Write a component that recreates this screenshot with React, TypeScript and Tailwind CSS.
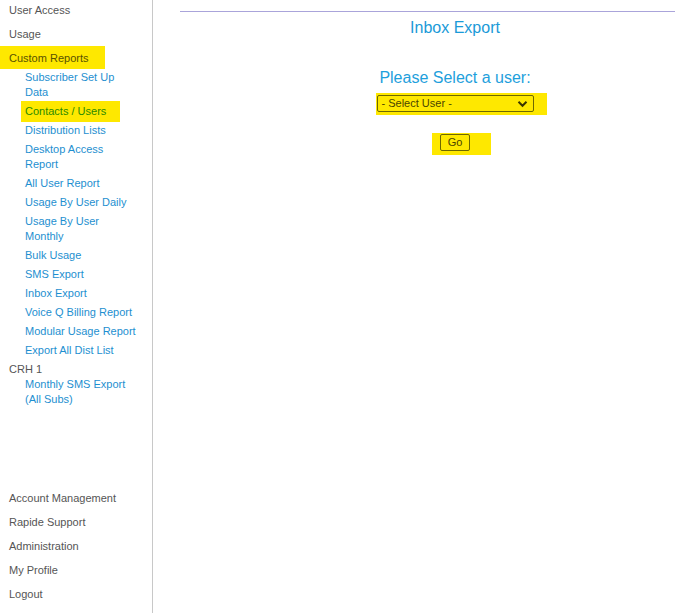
import React from 'react';

// Inbox Export page: left report nav + centered form

type Sub = { label: string; active?: boolean };

const customReports: Sub[] = [
  { label: 'Subscriber Set Up Data' },
  { label: 'Contacts / Users', active: true },
  { label: 'Distribution Lists' },
  { label: 'Desktop Access Report' },
  { label: 'All User Report' },
  { label: 'Usage By User Daily' },
  { label: 'Usage By User Monthly' },
  { label: 'Bulk Usage' },
  { label: 'SMS Export' },
  { label: 'Inbox Export' },
  { label: 'Voice Q Billing Report' },
  { label: 'Modular Usage Report' },
  { label: 'Export All Dist List' },
];

const bottomLinks = ['Account Management', 'Rapide Support', 'Administration', 'My Profile', 'Logout'];

const SubLink = ({ item }: { item: Sub }) =>
  item.active ? (
    <a className="-my-[3px] -ml-1 w-[99px] bg-[#fee800] py-[3px] pl-1 text-[#2a8a00]">{item.label}</a>
  ) : (
    <a className="text-[#1e8fd0]">{item.label}</a>
  );

const App = () => {
  return (
    <div className="flex h-screen overflow-hidden bg-white text-[11px] leading-[15px] font-['Liberation_Sans',Arial,sans-serif]">
      {/* Sidebar */}
      <aside className="flex w-[153px] shrink-0 flex-col justify-between border-r border-[#c8c8c8] pb-[9px]">
        <nav className="flex flex-col">
          <div className="flex h-5 items-center pl-[9px] text-[#555]">User Access</div>
          <div className="mt-1 flex h-5 items-center pl-[9px] text-[#555]">Usage</div>
          <div className="mt-[2px] flex h-[23px] w-[105px] items-center bg-[#fee800] pl-[9px] pt-[1px] text-[#5a5200]">
            Custom Reports
          </div>
          <div className="flex w-[138px] flex-col gap-1 pl-[25px] pt-[0.5px]">
            {customReports.map((r) => (
              <SubLink key={r.label} item={r} />
            ))}
          </div>
          <div className="mt-1 pl-[9px] text-[#555]">CRH 1</div>
          <div className="flex w-[138px] flex-col pl-[25px]">
            <a className="text-[#1e8fd0]">Monthly SMS Export (All Subs)</a>
          </div>
        </nav>
        <nav className="flex flex-col gap-1">
          {bottomLinks.map((l) => (
            <div key={l} className="flex h-5 items-center pl-[9px] text-[#555]">
              {l}
            </div>
          ))}
        </nav>
      </aside>

      {/* Main */}
      <main className="min-w-0 flex-1">
        <div className="ml-[27px] mt-[11px] w-[550px] shrink-0 border-t border-[#aaa4da]">
          <h1 className="mt-[7px] text-center text-[16px] leading-[18px] text-[#1a9ad8]">Inbox Export</h1>

          <div className="mt-[32px] flex flex-col items-center">
            <p className="text-[16px] leading-[18px] text-[#1ea0dc]">Please Select a user:</p>

            <div className="ml-[12px] mt-[6px] bg-[#fee800] pb-[3px] pl-[1px] pr-[13px] pt-[2px]">
              <div className="flex h-[17px] w-[157px] items-center justify-between rounded-[2px] border border-[#6e6800] pl-[4px] pr-[4px] text-[#4a4400]">
                <span>- Select User -</span>
                <svg width="11" height="8" viewBox="0 0 11 8" className="mr-[1px]">
                  <path d="M1.5 1.8 L5.5 5.8 L9.5 1.8" fill="none" stroke="#3a3500" strokeWidth="2" />
                </svg>
              </div>
            </div>

            <div className="ml-[13px] mt-[18px] bg-[#fee800] pb-[4px] pl-[8px] pr-[21px] pt-[1px]">
              <button className="flex h-[17px] w-[30px] items-center justify-center rounded-[2px] border border-[#6e6800] text-[#4a4400]">
                Go
              </button>
            </div>
          </div>
        </div>
      </main>
    </div>
  );
};

export default App;
